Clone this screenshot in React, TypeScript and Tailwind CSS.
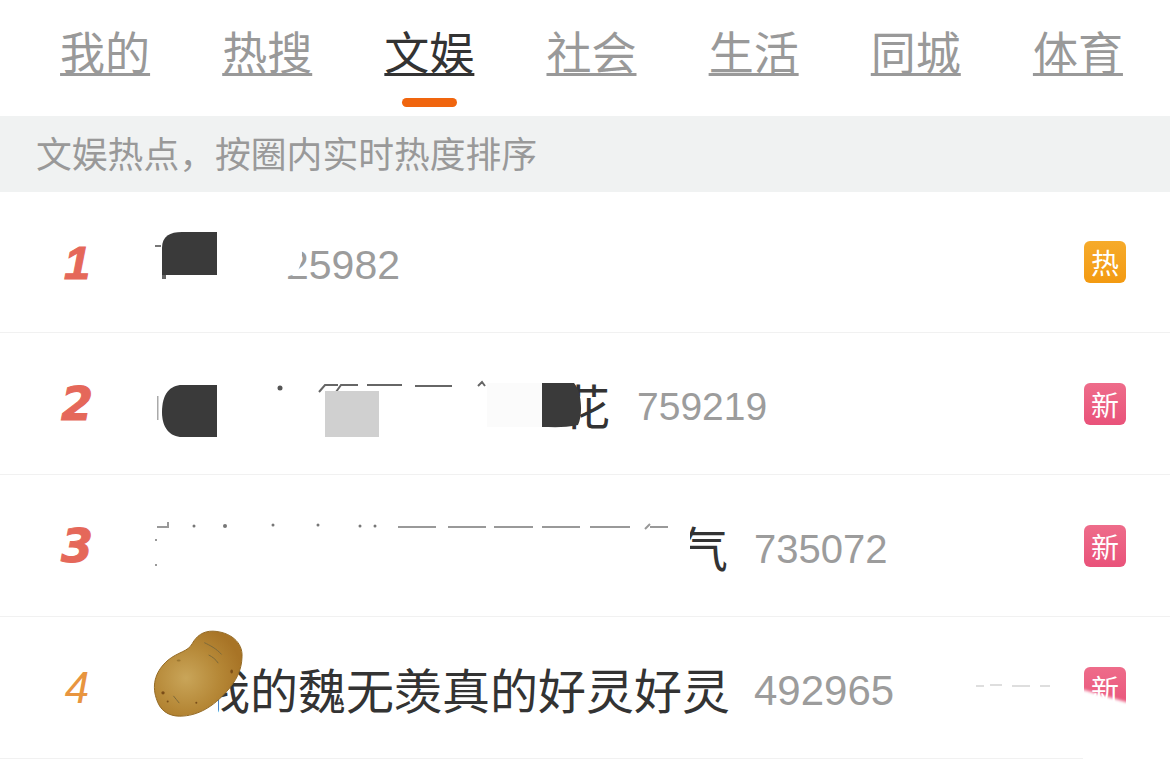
const tabs = ['我的', '热搜', '文娱', '社会', '生活', '同城', '体育'];

const cjk = "font-['Noto_Sans_CJK_SC',sans-serif]";

function Badge({ label, className }: { label: string; className: string }) {
  return (
    <div className={`flex h-[42px] w-[42px] items-center justify-center rounded-[6px] text-[28px] leading-none text-white ${className}`}>
      {label}
    </div>
  );
}

function Potato() {
  return (
    <svg viewBox="340 360 270 260" className="absolute left-[153px] top-[13px] h-[87px] w-[90px]">
      <defs>
        <radialGradient id="potato" cx="0.36" cy="0.55" r="0.65">
          <stop offset="0" stopColor="#c9a559" />
          <stop offset="0.6" stopColor="#b58736" />
          <stop offset="1" stopColor="#a87426" />
        </radialGradient>
      </defs>
      <path
        d="M520 363C570 365 610 395 607 440C606 480 590 512 560 545C522 588 475 618 420 618C385 618 360 600 350 565C335 520 350 480 385 450C415 425 445 425 458 400C470 378 490 362 520 363Z"
        fill="url(#potato)"
        stroke="#946a24"
        strokeWidth="3"
      />
      <path d="M495 398C510 405 530 415 545 432M508 435C518 440 528 447 535 458M402 558C408 565 413 572 418 578" fill="none" stroke="#7d6a3a" strokeWidth="3" strokeLinecap="round" />
      <g fill="#7a4d18">
        <ellipse cx="576" cy="484" rx="4" ry="6" />
        <ellipse cx="370" cy="548" rx="5" ry="5" />
        <circle cx="384" cy="574" r="3" />
        <circle cx="470" cy="578" r="3" />
        <ellipse cx="417" cy="451" rx="6" ry="3" fill="#9a7630" />
      </g>
    </svg>
  );
}

function Row({
  rank,
  rankClass,
  rowClass,
  children,
  number,
  numberClass,
  badge,
  overlay,
}: {
  rank: string;
  rankClass: string;
  rowClass: string;
  children: React.ReactNode;
  number: string;
  numberClass: string;
  badge: React.ReactNode;
  overlay: React.ReactNode;
}) {
  return (
    <div className={`relative flex items-center border-b border-[#f1f1f1] pr-[44px] ${rowClass}`}>
      <div className={`w-[154px] text-center leading-none text-[#e5685a] ${rankClass}`}>{rank}</div>
      {children}
      <div className={`mt-[6px] font-['Liberation_Sans',sans-serif] leading-none text-[#9c9c9c] ${numberClass}`}>{number}</div>
      <div className="ml-auto">{badge}</div>
      {overlay}
    </div>
  );
}

const hot = <Badge label="热" className="bg-gradient-to-b from-[#f6ab2a] to-[#f39a10]" />;
const fresh = <Badge label="新" className="bg-gradient-to-b from-[#ee6c8a] to-[#e9527a]" />;

export default function App() {
  return (
    <div className={`h-[762px] w-[1170px] overflow-hidden bg-white ${cjk}`}>
      <div className="flex h-[116px] pl-[24px] pr-[11px] pt-[21px]">
        {tabs.map((tab) => (
          <div key={tab} className="flex flex-1 flex-col items-center">
            <span
              className={
                tab === '文娱'
                  ? 'text-[45px] leading-[60px] text-[#333333] underline decoration-[3px] underline-offset-[3px]'
                  : 'text-[45px] leading-[60px] text-[#999999] underline decoration-[3px] underline-offset-[3px]'
              }
            >
              {tab}
            </span>
            {tab === '文娱' && <div className="mt-[17px] h-[9px] w-[55px] rounded-full bg-[#f0650e]" />}
          </div>
        ))}
      </div>

      <div className="flex h-[76px] items-center bg-[#f0f2f2] pb-[3px] pl-[36px] text-[35.8px] leading-none text-[#999999]">
        文娱热点，按圈内实时热度排序
      </div>

      <Row
        rank="1"
        rowClass="h-[141px]"
        rankClass="font-['Liberation_Sans',sans-serif] text-[47px] font-bold italic [-webkit-text-stroke:1px_#e5685a]"
        number="25982"
        numberClass="text-[41px]"
        badge={hot}
        overlay={
          <svg viewBox="0 192 1170 141" className="absolute left-0 top-0 h-[141px] w-[1170px] blur-[0.7px]">
            <path d="M162 248C162 236 170 232 182 232H217V275H162Z" fill="#3a3a3a" />
            <rect x="155" y="245" width="6" height="2" fill="#777777" />
            <rect x="162" y="275" width="4" height="4" fill="#666666" />
            <path d="M272 237H296C304 245 304 262 296 274L272 281Z" fill="#ffffff" />
          </svg>
        }
      >
        <div className="w-[132px]" />
      </Row>

      <Row
        rank="2"
        rowClass="h-[142px]"
        rankClass="font-['DejaVu_Sans',sans-serif] text-[46px] font-bold italic [-webkit-text-stroke:1px_#e5685a]"
        number="759219"
        numberClass="text-[39px]"
        badge={fresh}
        overlay={
          <svg viewBox="0 333 1170 141" className="absolute left-0 top-0 h-[141px] w-[1170px] blur-[0.7px]">
            <rect x="157" y="396" width="1.5" height="24" fill="#aaaaaa" />
            <path d="M182 385H217V437H182C170 437 162 428 162 412C162 394 170 385 182 385Z" fill="#3a3a3a" />
            <circle cx="280" cy="388" r="2.5" fill="#555555" />
            <path d="M319 392L325 385H338M336 392L341 385H358M367 385H402M415 386H452M478 386L482 382L485 386" fill="none" stroke="#666666" strokeWidth="2" />
            <rect x="325" y="391" width="54" height="46" fill="#d0d0d0" />
            <rect x="487" y="383" width="55" height="44" fill="#fbfbfb" />
            <path d="M542 383H574C582 392 583 415 578 425C565 428 552 427 542 427Z" fill="#3a3a3a" />
          </svg>
        }
      >
        <div className="flex w-[456px] justify-end text-[48px] leading-none text-[#333333]">花</div>
        <div className="w-[27px]" />
      </Row>

      <Row
        rank="3"
        rowClass="h-[142px]"
        rankClass="font-['DejaVu_Sans',sans-serif] text-[46px] font-bold italic [-webkit-text-stroke:1px_#e5685a]"
        number="735072"
        numberClass="text-[40px]"
        badge={fresh}
        overlay={
          <svg viewBox="0 475 1170 141" className="absolute left-0 top-0 h-[141px] w-[1170px] blur-[0.7px]">
            <rect x="676" y="515" width="14" height="50" fill="#ffffff" />
            <path d="M157 527H168V522M398 527H436M448 527H486M494 527H533M542 527H580M590 527H630M645 529L650 524M650 527H668" fill="none" stroke="#999999" strokeWidth="2" />
            <g fill="#777777">
              <circle cx="194" cy="526" r="1.5" />
              <circle cx="225" cy="526" r="2" />
              <circle cx="273" cy="525" r="1.5" />
              <circle cx="318" cy="525" r="1.5" />
              <circle cx="360" cy="526" r="1.5" />
              <circle cx="375" cy="526" r="1.5" />
              <circle cx="156" cy="540" r="1" />
              <circle cx="156" cy="565" r="1" />
            </g>
          </svg>
        }
      >
        <div className="flex w-[574px] justify-end text-[48px] leading-none text-[#333333]">气</div>
        <div className="w-[26px]" />
      </Row>

      <Row
        rank="4"
        rowClass="h-[142px]"
        rankClass="font-['Liberation_Sans',sans-serif] text-[44px] italic text-[#e8953f]"
        number="492965"
        numberClass="text-[42px]"
        badge={fresh}
        overlay={
          <>
            <svg viewBox="0 617 1170 141" className="absolute left-0 top-0 h-[141px] w-[1170px]">
              <rect x="198" y="660" width="20" height="56" fill="#ffffff" />
              <path d="M976 686H984M990 685H1002M1012 686H1030M1040 686H1050" fill="none" stroke="#d4d4d4" strokeWidth="1.5" />
            </svg>
            <div className="absolute left-[1068px] top-[79px] h-[60px] w-[74px] origin-top rotate-[16deg] bg-white blur-[1.5px]" />
            <div className="absolute left-[1083px] top-[125px] h-[20px] w-[87px] bg-white" />
            <Potato />
          </>
        }
      >
        <div className="w-[48px]" />
        <div className="w-[526px] whitespace-nowrap text-[48px] leading-none text-[#333333]">我的魏无羡真的好灵好灵</div>
        <div className="w-[26px]" />
      </Row>
    </div>
  );
}
